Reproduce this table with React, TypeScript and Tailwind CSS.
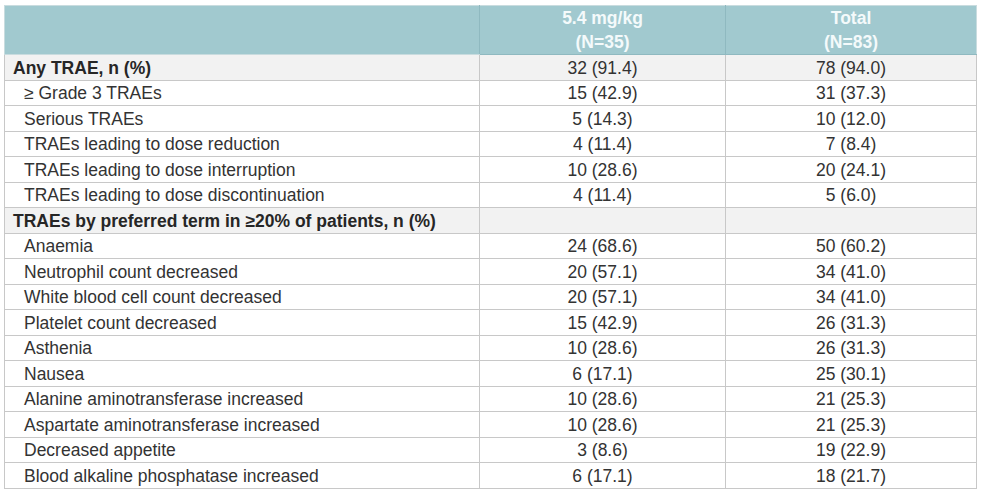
const rows: { label: string; a: string; b: string; kind: "group" | "item" }[] = [
  { label: "Any TRAE, n (%)", a: "32 (91.4)", b: "78 (94.0)", kind: "group" },
  { label: "≥ Grade 3 TRAEs", a: "15 (42.9)", b: "31 (37.3)", kind: "item" },
  { label: "Serious TRAEs", a: "5 (14.3)", b: "10 (12.0)", kind: "item" },
  { label: "TRAEs leading to dose reduction", a: "4 (11.4)", b: "7 (8.4)", kind: "item" },
  { label: "TRAEs leading to dose interruption", a: "10 (28.6)", b: "20 (24.1)", kind: "item" },
  { label: "TRAEs leading to dose discontinuation", a: "4 (11.4)", b: "5 (6.0)", kind: "item" },
  { label: "TRAEs by preferred term in ≥20% of patients, n (%)", a: "", b: "", kind: "group" },
  { label: "Anaemia", a: "24 (68.6)", b: "50 (60.2)", kind: "item" },
  { label: "Neutrophil count decreased", a: "20 (57.1)", b: "34 (41.0)", kind: "item" },
  { label: "White blood cell count decreased", a: "20 (57.1)", b: "34 (41.0)", kind: "item" },
  { label: "Platelet count decreased", a: "15 (42.9)", b: "26 (31.3)", kind: "item" },
  { label: "Asthenia", a: "10 (28.6)", b: "26 (31.3)", kind: "item" },
  { label: "Nausea", a: "6 (17.1)", b: "25 (30.1)", kind: "item" },
  { label: "Alanine aminotransferase increased", a: "10 (28.6)", b: "21 (25.3)", kind: "item" },
  { label: "Aspartate aminotransferase increased", a: "10 (28.6)", b: "21 (25.3)", kind: "item" },
  { label: "Decreased appetite", a: "3 (8.6)", b: "19 (22.9)", kind: "item" },
  { label: "Blood alkaline phosphatase increased", a: "6 (17.1)", b: "18 (21.7)", kind: "item" },
];

export default function App() {
  return (
    <div className="w-[981px] h-[493px] bg-white pt-[5px] pl-[4px] font-['Liberation_Sans',Arial,sans-serif] text-[#333333]">
      <table className="border-collapse w-[972px] table-fixed text-[17.5px] leading-none">
        <colgroup>
          <col className="w-[475px]" />
          <col className="w-[246px]" />
          <col className="w-[251px]" />
        </colgroup>
        <thead>
          <tr className="h-[49px] bg-[#a1c9cf]">
            <th className="border border-[#c9dcdf] border-r-[#8fb9c0]"></th>
            <th className="border border-[#8fb9c0] border-t-[#c9dcdf] text-center font-bold text-[#f4fafb] leading-[24px] align-middle">
              5.4 mg/kg
              <br />
              (N=35)
            </th>
            <th className="border border-[#8fb9c0] border-t-[#c9dcdf] border-r-[#c9dcdf] text-center font-bold text-[#f4fafb] leading-[24px] align-middle">
              Total
              <br />
              (N=83)
            </th>
          </tr>
        </thead>
        <tbody>
          {rows.map((r, i) => (
            <tr
              key={i}
              className={
                r.kind === "group" ? "h-[25.5px] bg-[#f2f2f2]" : "h-[25.5px] bg-white"
              }
            >
              <td
                className={
                  r.kind === "group"
                    ? "border border-[#c8c8c8] pl-[8px] pt-[2px] font-bold text-[#262626]"
                    : "border border-[#c8c8c8] pl-[19px] pt-[2px]"
                }
              >
                {r.label}
              </td>
              <td className="border border-[#c8c8c8] pt-[2px] text-center">{r.a}</td>
              <td className="border border-[#c8c8c8] pt-[2px] text-center">{r.b}</td>
            </tr>
          ))}
        </tbody>
      </table>
    </div>
  );
}
